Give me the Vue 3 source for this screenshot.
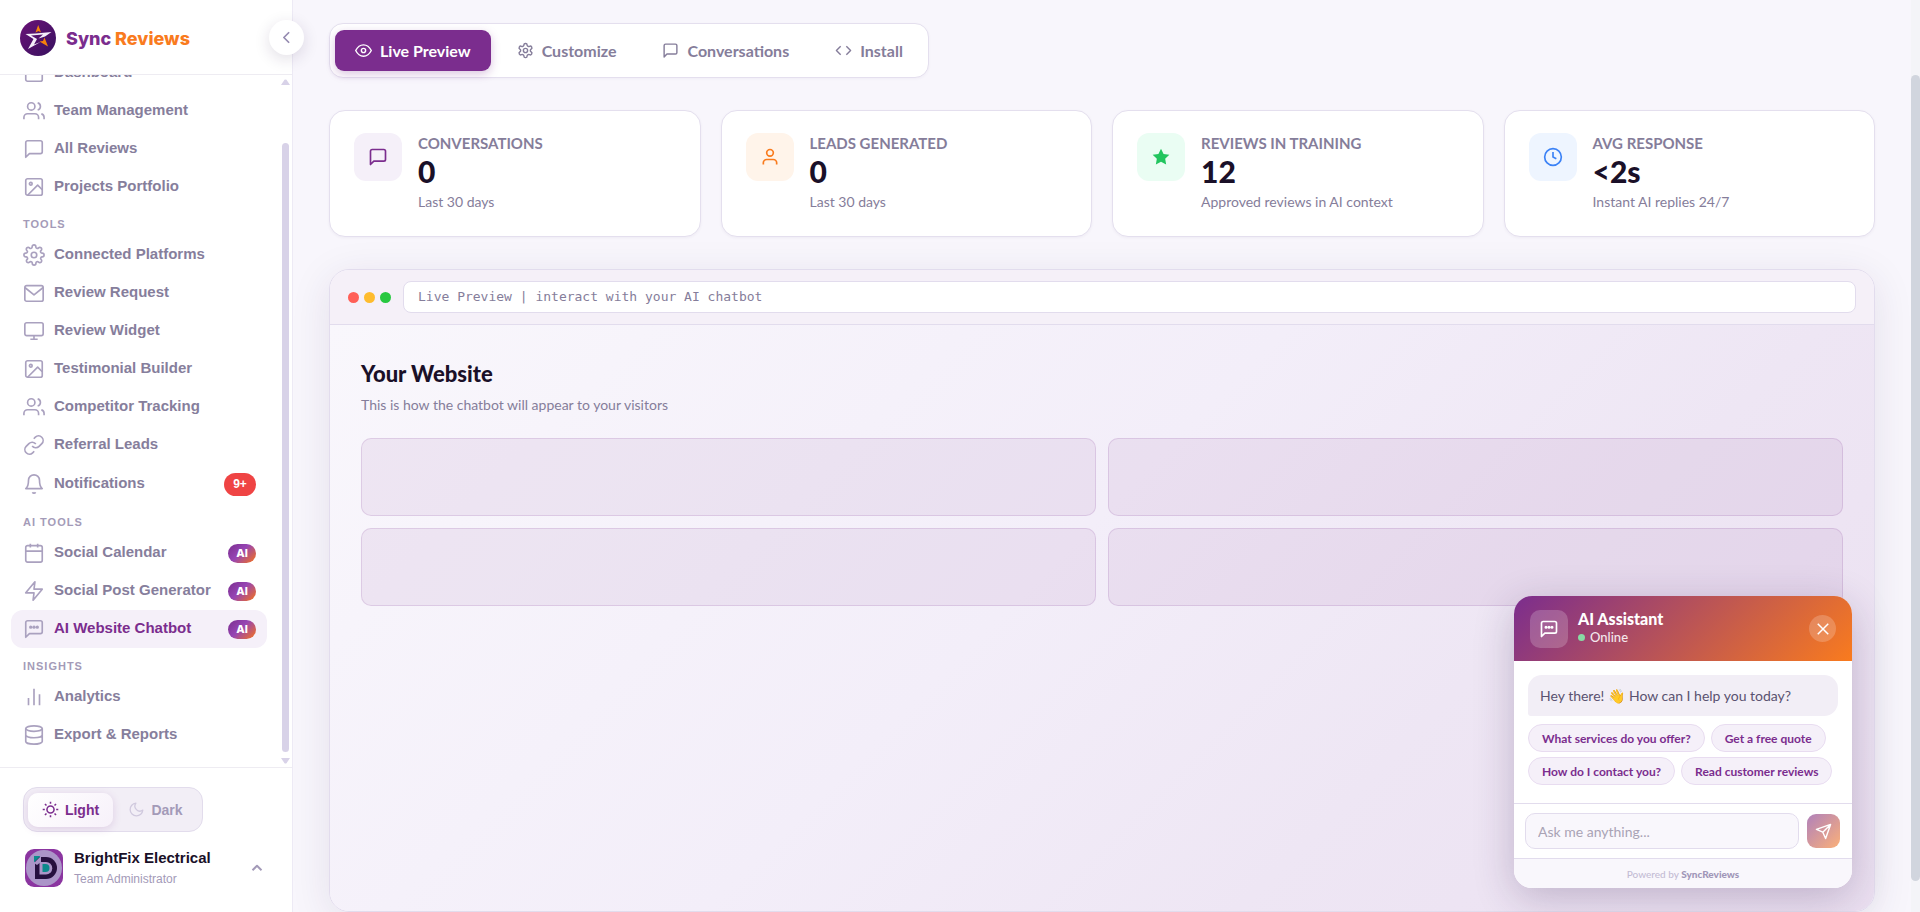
<script setup>
import { ref } from 'vue'

const icons = {
  home: '<rect x="3" y="3" width="18" height="18" rx="2"/>',
  users: '<path d="M17 21v-2a4 4 0 0 0-4-4H5a4 4 0 0 0-4 4v2"/><circle cx="9" cy="7" r="4"/><path d="M23 21v-2a4 4 0 0 0-3-3.87M16 3.13a4 4 0 0 1 0 7.75"/>',
  message: '<path d="M21 15a2 2 0 0 1-2 2H7l-4 4V5a2 2 0 0 1 2-2h14a2 2 0 0 1 2 2z"/>',
  image: '<rect x="3" y="3" width="18" height="18" rx="2"/><circle cx="8.5" cy="8.5" r="1.5"/><path d="M21 15l-5-5L5 21"/>',
  gear: '<circle cx="12" cy="12" r="3"/><path d="M19.4 15a1.65 1.65 0 0 0 .33 1.82l.06.06a2 2 0 1 1-2.83 2.83l-.06-.06a1.65 1.65 0 0 0-2.8 1.17V21a2 2 0 0 1-4 0v-.09a1.65 1.65 0 0 0-2.9-1.16l-.06.06a2 2 0 1 1-2.83-2.83l.06-.06A1.65 1.65 0 0 0 3.09 14H3a2 2 0 0 1 0-4h.09a1.65 1.65 0 0 0 1.16-2.9l-.06-.06a2 2 0 1 1 2.83-2.83l.06.06A1.65 1.65 0 0 0 10 3.09V3a2 2 0 0 1 4 0v.09a1.65 1.65 0 0 0 2.9 1.16l.06-.06a2 2 0 1 1 2.83 2.83l-.06.06A1.65 1.65 0 0 0 20.91 10H21a2 2 0 0 1 0 4h-.09a1.65 1.65 0 0 0-1.51 1z"/>',
  cog: '<circle cx="12" cy="12" r="3"/><path d="M12.22 2h-.44a2 2 0 0 0-2 2v.18a2 2 0 0 1-1 1.73l-.43.25a2 2 0 0 1-2 0l-.15-.08a2 2 0 0 0-2.73.73l-.22.38a2 2 0 0 0 .73 2.73l.15.1a2 2 0 0 1 1 1.72v.51a2 2 0 0 1-1 1.74l-.15.09a2 2 0 0 0-.73 2.73l.22.38a2 2 0 0 0 2.73.73l.15-.08a2 2 0 0 1 2 0l.43.25a2 2 0 0 1 1 1.73V20a2 2 0 0 0 2 2h.44a2 2 0 0 0 2-2v-.18a2 2 0 0 1 1-1.73l.43-.25a2 2 0 0 1 2 0l.15.08a2 2 0 0 0 2.73-.73l.22-.39a2 2 0 0 0-.73-2.73l-.15-.08a2 2 0 0 1-1-1.74v-.5a2 2 0 0 1 1-1.74l.15-.09a2 2 0 0 0 .73-2.73l-.22-.38a2 2 0 0 0-2.73-.73l-.15.08a2 2 0 0 1-2 0l-.43-.25a2 2 0 0 1-1-1.73V4a2 2 0 0 0-2-2z"/>',
  mail: '<rect x="2" y="4" width="20" height="17" rx="2"/><path d="M2 6l10 8 10-8"/>',
  monitor: '<rect x="2" y="3" width="20" height="14" rx="2"/><path d="M8 21h8M12 17v4"/>',
  link: '<path d="M10 13a5 5 0 0 0 7.54.54l3-3a5 5 0 0 0-7.07-7.07l-1.72 1.71"/><path d="M14 11a5 5 0 0 0-7.54-.54l-3 3a5 5 0 0 0 7.07 7.07l1.71-1.71"/>',
  bell: '<path d="M18 8A6 6 0 0 0 6 8c0 7-3 9-3 9h18s-3-2-3-9M13.73 21a2 2 0 0 1-3.46 0"/>',
  calendar: '<rect x="3" y="4" width="18" height="18" rx="2"/><path d="M16 2v4M8 2v4M3 10h18"/>',
  bolt: '<path d="M13 2L3 14h9l-1 8 10-12h-9l1-8z"/>',
  bot: '<path d="M21 15a2 2 0 0 1-2 2H7l-4 4V5a2 2 0 0 1 2-2h14a2 2 0 0 1 2 2z"/><path d="M8.400 10h.01M12 10h.01M15.600 10h.01" stroke-width="3.6" stroke-linecap="round"/>',
  chart: '<path d="M18 21V9M12 21V3M6 21v-8"/>',
  database: '<ellipse cx="12" cy="5" rx="9" ry="3"/><path d="M21 12c0 1.66-4 3-9 3s-9-1.34-9-3M3 5v14c0 1.66 4 3 9 3s9-1.34 9-3V5"/>',
  eye: '<path d="M1 12s4-8 11-8 11 8 11 8-4 8-11 8S1 12 1 12z"/><circle cx="12" cy="12" r="3"/>',
  code: '<path d="M16 18l6-6-6-6M8 6l-6 6 6 6"/>',
  user: '<path d="M20 21v-2a4 4 0 0 0-4-4H8a4 4 0 0 0-4 4v2"/><circle cx="12" cy="7" r="4"/>',
  star: '<path fill="currentColor" stroke="none" d="M12 2l3.090 6.260L22 9.270l-5 4.870 1.180 6.880L12 17.770l-6.180 3.250L7 14.140 2 9.270l6.910-1.010z"/>',
  clock: '<circle cx="12" cy="12" r="10"/><path d="M12 6v6l4 2"/>',
  sun: '<circle cx="12" cy="12" r="5"/><path d="M12 1v3M12 20v3M4.2 4.2l2.1 2.1M17.7 17.7l2.1 2.1M1 12h3M20 12h3M4.2 19.8l2.1-2.1M17.7 6.3l2.1-2.1"/>',
  moon: '<path d="M21 12.79A9 9 0 1 1 11.21 3 7 7 0 0 0 21 12.79z"/>',
  left: '<path d="M15 18l-6-6 6-6"/>',
  up: '<path d="M18 15l-6-6-6 6"/>',
  close: '<path d="M19 5L5 19M5 5l14 14"/>',
  send: '<path d="M22 2L11 13M22 2l-7 20-4-9-9-4z"/>',
}

const groups = [
  { title: '', items: [
    { label: 'Dashboard', icon: 'home' },
    { label: 'Team Management', icon: 'users' },
    { label: 'All Reviews', icon: 'message' },
    { label: 'Projects Portfolio', icon: 'image' },
  ] },
  { title: 'TOOLS', items: [
    { label: 'Connected Platforms', icon: 'gear' },
    { label: 'Review Request', icon: 'mail' },
    { label: 'Review Widget', icon: 'monitor' },
    { label: 'Testimonial Builder', icon: 'image' },
    { label: 'Competitor Tracking', icon: 'users' },
    { label: 'Referral Leads', icon: 'link' },
    { label: 'Notifications', icon: 'bell', count: '9+' },
  ] },
  { title: 'AI TOOLS', items: [
    { label: 'Social Calendar', icon: 'calendar', ai: true },
    { label: 'Social Post Generator', icon: 'bolt', ai: true },
    { label: 'AI Website Chatbot', icon: 'bot', ai: true, active: true },
  ] },
  { title: 'INSIGHTS', items: [
    { label: 'Analytics', icon: 'chart' },
    { label: 'Export & Reports', icon: 'database' },
  ] },
]

const tabs = [
  { label: 'Live Preview', icon: 'eye' },
  { label: 'Customize', icon: 'cog' },
  { label: 'Conversations', icon: 'message' },
  { label: 'Install', icon: 'code' },
]
const activeTab = ref('Live Preview')

const stats = [
  { label: 'CONVERSATIONS', value: '0', note: 'Last 30 days', icon: 'message', tone: 'purple' },
  { label: 'LEADS GENERATED', value: '0', note: 'Last 30 days', icon: 'user', tone: 'orange' },
  { label: 'REVIEWS IN TRAINING', value: '12', note: 'Approved reviews in AI context', icon: 'star', tone: 'green' },
  { label: 'AVG RESPONSE', value: '<2s', note: 'Instant AI replies 24/7', icon: 'clock', tone: 'blue' },
]

const prompts = ['What services do you offer?', 'Get a free quote', 'How do I contact you?', 'Read customer reviews']
const draft = ref('')
</script>

<template>
  <div class="app">
    <aside class="sidebar">
      <header class="brand">
        <svg class="brand-mark" viewBox="0 0 36 36" aria-hidden="true">
          <defs>
            <linearGradient id="markFill" x1="0" y1="0" x2="1" y2="1">
              <stop offset="0" stop-color="#6a1277" />
              <stop offset="1" stop-color="#37115f" />
            </linearGradient>
          </defs>
          <circle cx="18" cy="18" r="18" fill="url(#markFill)" />
          <path d="M15.500 12.500L18.200 5L21 12.500L18.500 11Z" fill="#f5820b" />
          <path d="M24.500 17.500L28 26.500L19.500 21.500L23 21Z" fill="#f5820b" />
          <path d="M31.500 12L15.500 13.500L5.500 14L13.500 19L8 29L20.500 22L14 24.500L17 19L11 15.500L23 14.500L18.500 18.500L25 16.500Z" fill="#f4effa" />
        </svg>
        <div class="brand-name"><span>Sync</span> <span class="accent">Reviews</span></div>
        <button class="collapse" type="button" aria-label="Collapse sidebar">
          <svg class="icon" viewBox="0 0 24 24" v-html="icons.left"></svg>
        </button>
      </header>

      <nav class="nav">
        <div v-for="group in groups" :key="group.title" class="group">
          <div v-if="group.title" class="group-title">{{ group.title }}</div>
          <a v-for="item in group.items" :key="item.label" href="#" class="nav-item" :class="{ active: item.active, counted: item.count }">
            <svg class="icon" viewBox="0 0 24 24" v-html="icons[item.icon]"></svg>
            <span class="nav-label">{{ item.label }}</span>
            <span v-if="item.count" class="count">{{ item.count }}</span>
            <span v-if="item.ai" class="ai">AI</span>
          </a>
        </div>
        <div class="nav-scroll" aria-hidden="true">
          <svg viewBox="0 0 9 6"><path d="M0 6L3.500 .8Q4.500 0 5.500 .8L9 6Z" /></svg>
          <div class="nav-thumb"></div>
          <svg viewBox="0 0 9 6"><path d="M0 0L3.500 5.200Q4.500 6 5.500 5.200L9 0Z" /></svg>
        </div>
      </nav>

      <footer class="side-foot">
        <div class="theme">
          <button type="button" class="on"><svg class="icon" viewBox="0 0 24 24" v-html="icons.sun"></svg>Light</button>
          <button type="button"><svg class="icon" viewBox="0 0 24 24" v-html="icons.moon"></svg>Dark</button>
        </div>
        <button class="account" type="button">
          <svg class="avatar" viewBox="0 0 38 38" aria-hidden="true">
            <rect width="38" height="38" rx="9" fill="#8b35a0" />
            <circle cx="19" cy="19" r="18" fill="#ab95c8" />
            <path d="M10 8h11a11 11 0 0 1 0 22H10z" fill="#26103f" />
            <path d="M14.500 13h6.500a6 6 0 0 1 0 12.500h-6.500z" fill="#ab95c8" />
            <path d="M17.500 15h3a4 4 0 0 1 0 8h-3z" fill="#0c8a8c" />
            <path d="M9 7h6.500L9 13.500z" fill="#0c8a8c" />
            <path d="M9 14l7-7v6l-4 3z" fill="#ab95c8" />
          </svg>
          <span class="who"><strong>BrightFix Electrical</strong><small>Team Administrator</small></span>
          <svg class="icon" viewBox="0 0 24 24" v-html="icons.up"></svg>
        </button>
      </footer>
    </aside>

    <main class="main">
      <div class="tabs">
        <button v-for="tab in tabs" :key="tab.label" type="button" :class="{ on: activeTab === tab.label }" @click="activeTab = tab.label">
          <svg class="icon" viewBox="0 0 24 24" v-html="icons[tab.icon]"></svg>{{ tab.label }}
        </button>
      </div>

      <section class="stats">
        <article v-for="stat in stats" :key="stat.label" class="stat">
          <div class="stat-icon" :class="stat.tone"><svg class="icon" viewBox="0 0 24 24" v-html="icons[stat.icon]"></svg></div>
          <div>
            <div class="stat-label">{{ stat.label }}</div>
            <div class="stat-value">{{ stat.value }}</div>
            <div class="stat-note">{{ stat.note }}</div>
          </div>
        </article>
      </section>

      <section class="preview">
        <div class="chrome">
          <div class="dots"><i></i><i></i><i></i></div>
          <div class="address">Live Preview | interact with your AI chatbot</div>
        </div>
        <div class="site">
          <h2>Your Website</h2>
          <p>This is how the chatbot will appear to your visitors</p>
          <div class="blocks"><div v-for="n in 4" :key="n"></div></div>

          <div class="chat">
            <header class="chat-head">
              <div class="chat-icon"><svg class="icon" viewBox="0 0 24 24" v-html="icons.bot"></svg></div>
              <div class="chat-title"><strong>AI Assistant</strong><span><i></i>Online</span></div>
              <button type="button" aria-label="Close chat"><svg class="icon" viewBox="0 0 24 24" v-html="icons.close"></svg></button>
            </header>
            <div class="chat-body">
              <div class="bubble">Hey there! <span class="wave">👋</span> How can I help you today?</div>
              <div class="prompts"><button v-for="p in prompts" :key="p" type="button">{{ p }}</button></div>
            </div>
            <form class="chat-form" @submit.prevent>
              <input v-model="draft" type="text" aria-label="Message" placeholder="Ask me anything..." />
              <button type="submit" aria-label="Send"><svg class="icon" viewBox="0 0 24 24" v-html="icons.send"></svg></button>
            </form>
            <div class="powered">Powered by <strong>SyncReviews</strong></div>
          </div>
        </div>
      </section>
    </main>
    <div class="page-scroll" aria-hidden="true"><div></div></div>
  </div>
</template>

<style>
body { background: #f8f6fc; overflow: hidden; }
</style>

<style scoped>
* { box-sizing: border-box; }
button { font: inherit; border: 0; background: none; padding: 0; cursor: pointer; color: inherit; }
.icon { fill: none; stroke: currentColor; stroke-width: 2; stroke-linejoin: round; flex: none; display: block; }
.app { display: flex; height: 100vh; overflow: hidden; background: #f8f6fc; font-family: Lato, "Noto Color Emoji", sans-serif; color: #1a1028; }

.sidebar { position: relative; z-index: 2; width: 293px; flex: none; display: flex; flex-direction: column; background: #fff; border-right: 1px solid #edeaf5; font-family: "Liberation Sans", Arial, sans-serif; }
.brand { position: relative; height: 75px; flex: none; display: flex; align-items: center; gap: 10px; padding: 2px 20px 0; border-bottom: 1px solid #eeecf2; }
.brand-mark { width: 36px; height: 36px; }
.brand-name { padding-top: 2px; font: 800 18px/24px Inter, sans-serif; color: #7b2d8e; }
.brand-name .accent { color: #f97b1e; }
.collapse { position: absolute; right: -12px; top: 20px; width: 35px; height: 35px; border-radius: 50%; background: #fff; color: #958ab0; display: grid; place-items: center; box-shadow: 0 4px 16px rgba(40, 20, 70, .14); }
.collapse .icon { width: 21px; height: 21px; }

.nav { position: relative; flex: 1; min-height: 0; overflow: hidden; display: flex; flex-direction: column; justify-content: flex-end; padding: 0 25px 13px 11px; }
.group-title { height: 30px; padding: 3px 12px 0; font-size: 11px; line-height: 30px; font-weight: 700; letter-spacing: 1px; color: #a49bb8; }
.nav-item { display: flex; align-items: center; gap: 9px; height: 38px; padding: 0 11px 0 12px; border-radius: 12px; color: #867e9c; text-decoration: none; font-size: 15px; font-weight: 700; white-space: nowrap; }
.nav-item.counted { height: 40px; }
.nav-item .icon { width: 22px; height: 22px; stroke-width: 1.8; color: #aaa1bf; }
.nav-label { flex: 1; padding-bottom: 2px; line-height: 20px; }
.nav-item.active { background: #f5f0f9; color: #7b2d8e; }
.count { width: 32px; height: 23px; border-radius: 12px; background: #ef4444; color: #fff; font-size: 12px; line-height: 22px; text-align: center; }
.ai { width: 28px; height: 19px; border-radius: 10px; background: linear-gradient(135deg, #7b2d8e 0%, #9645b4 45%, #f97316 100%); color: #fff; font: 800 11px/19px Inter, sans-serif; text-align: center; }
.nav-scroll { position: absolute; right: 2px; top: 4px; bottom: 3px; width: 9px; display: flex; flex-direction: column; align-items: center; }
.nav-scroll svg { width: 9px; height: 6px; fill: #d8d2e8; flex: none; }
.nav-thumb { flex: 1; width: 7px; margin: 58px 0 6px; border-radius: 4px; background: #d8d2e8; }

.side-foot { height: 145px; flex: none; padding: 19px 24px 0 23px; border-top: 1px solid #eeecf2; }
.theme { display: flex; width: 180px; height: 45px; padding: 5px 4px; border: 1px solid #e2dcec; border-radius: 14px; background: #f2eef6; }
.theme button { display: flex; align-items: center; justify-content: center; gap: 6px; width: 85px; height: 34px; padding-bottom: 1px; border-radius: 10px; font-size: 14px; line-height: 18px; font-weight: 700; color: #a39ab8; }
.theme .icon { width: 17px; height: 17px; stroke-width: 1.8; color: #d0c9de; }
.theme .on { color: #7b2d8e; background: linear-gradient(135deg, #fff, #f7f1fa); box-shadow: 0 2px 8px rgba(123, 45, 142, .16); }
.theme .on .icon { color: #7b2d8e; stroke-width: 2.2; }
.account { display: flex; align-items: center; width: 100%; margin-top: 16px; padding: 0 2px; text-align: left; }
.avatar { width: 38px; height: 38px; flex: none; }
.who { flex: 1; margin-left: 11px; }
.who strong, .who small { display: block; }
.who strong { font-size: 15px; line-height: 20px; color: #1a1028; }
.who small { font-size: 12px; line-height: 18px; padding-top: 2px; color: #a39ab8; }
.account .icon { width: 18px; height: 18px; color: #a39ab8; stroke-width: 2.6; }

.main { flex: 1; min-width: 0; padding: 23px 36px 0; }
.tabs { display: inline-flex; gap: 6px; padding: 6px 5px; border: 1px solid #e4dfee; border-radius: 14px; background: #fff; vertical-align: top; box-shadow: 0 1px 3px rgba(60, 30, 90, .04); }
.tabs button { display: flex; align-items: center; gap: 8px; height: 41px; padding: 0 20px; border-radius: 9px; font-size: 16px; font-weight: 700; color: #857d9a; }
.tabs .icon { width: 17px; height: 17px; }
.tabs .on { background: #7b2d8e; color: #fff; box-shadow: 0 3px 10px rgba(123, 45, 142, .28); }

.stats { display: grid; grid-template-columns: repeat(4, 1fr); gap: 20px; margin-top: 32px; }
.stat { display: flex; gap: 16px; min-height: 127px; padding: 22px 24px 21px; border: 1px solid #e4dfee; border-radius: 16px; background: #fff; box-shadow: 0 1px 3px rgba(60, 30, 90, .05); }
.stat-icon { width: 48px; height: 48px; border-radius: 12px; display: grid; place-items: center; flex: none; }
.stat-icon .icon { width: 20px; height: 20px; }
.purple { background: #f5f0f9; color: #7b2d8e; }
.orange { background: #fff4ea; color: #f97b1e; }
.green { background: #eafdf3; color: #22c55e; }
.blue { background: #eef5ff; color: #3b82f6; }
.stat-label { font-size: 15px; line-height: 20px; font-weight: 700; color: #857d9a; }
.stat-value { font-size: 30px; line-height: 36px; font-weight: 900; color: #1a1028; }
.stat-note { font-size: 14px; line-height: 26px; color: #857d9a; }

.preview { margin-top: 32px; border: 1px solid #e2dced; border-radius: 20px; box-shadow: 0 8px 40px rgba(50, 25, 75, .1); }
.chrome { display: flex; align-items: center; gap: 12px; padding: 11px 18px; border-bottom: 1px solid #e2dced; border-radius: 19px 19px 0 0; background: #f5f0f8; }
.dots { display: flex; gap: 5px; }
.dots i { width: 11px; height: 11px; border-radius: 50%; background: #ff5f57; }
.dots i:nth-child(2) { background: #febc2e; }
.dots i:nth-child(3) { background: #28c840; }
.address { flex: 1; height: 32px; padding: 0 14px; border: 1px solid #e2dced; border-radius: 8px; background: #fff; color: #857d9a; font: 13px/30px "DejaVu Sans Mono", monospace; }
.site { position: relative; min-height: 586px; padding: 33px 31px 32px; border-radius: 0 0 19px 19px; background: linear-gradient(135deg, #f9f7fc 0%, #f3eef9 45%, #eee6f4 70%, #ebe0f1 100%); }
h2 { margin: 0; font-size: 22px; line-height: 32px; font-weight: 900; }
p { margin: 3px 0 22px; font-size: 14px; line-height: 23px; color: #857d9a; }
.blocks { display: grid; grid-template-columns: 1fr 1fr; gap: 12px; }
.blocks div { height: 78px; border: 1px solid rgba(123, 45, 142, .14); border-radius: 10px; background: rgba(123, 45, 142, .08); }

.chat { position: absolute; right: 22px; bottom: 23px; width: 338px; border-radius: 18px; overflow: hidden; background: #fff; box-shadow: 0 10px 40px rgba(50, 25, 75, .24); }
.chat-head { display: flex; align-items: center; gap: 10px; height: 65px; padding: 0 16px; background: linear-gradient(135deg, #7b2d8e, #f97b1e); color: #fff; }
.chat-icon { width: 38px; height: 38px; border-radius: 10px; display: grid; place-items: center; background: rgba(255, 255, 255, .2); }
.chat-icon .icon { width: 20px; height: 20px; }
.chat-title { flex: 1; padding-bottom: 2px; }
.chat-title strong { display: block; font-size: 16px; line-height: 19px; font-weight: 900; }
.chat-title span { display: flex; align-items: center; gap: 5px; font-size: 13px; line-height: 18px; font-weight: 500; opacity: .88; }
.chat-title i { width: 7px; height: 7px; border-radius: 50%; background: #86efac; }
.chat-head button { width: 27px; height: 27px; border-radius: 50%; display: grid; place-items: center; background: rgba(255, 255, 255, .2); }
.chat-head button .icon { width: 18px; height: 18px; }
.chat-body { padding: 14px 14px 18px; }
.bubble { height: 41px; padding: 0 12px; border-radius: 14px 14px 14px 3px; background: #f2eef6; font-size: 14px; line-height: 41px; color: #5a5270; white-space: nowrap; }
.wave { font-family: "Noto Color Emoji", sans-serif; }
.prompts { display: flex; flex-wrap: wrap; gap: 5px 6px; margin-top: 8px; }
.prompts button { height: 28px; padding: 0 13px; border: 1px solid #e8dcf0; border-radius: 14px; background: #f5f0f9; color: #7b2d8e; font-size: 12px; font-weight: 700; white-space: nowrap; }
.chat-form { display: flex; align-items: center; gap: 8px; height: 55px; padding: 0 12px 0 11px; border-top: 1px solid #e2dced; }
.chat-form input { flex: 1; min-width: 0; height: 36px; padding: 0 12px; border: 1px solid #e2dced; border-radius: 10px; background: #f9f7fc; font: 14px Lato, sans-serif; color: #1a1028; outline: 0; }
.chat-form input::placeholder { color: #a9a3b5; opacity: 1; }
.chat-form button { width: 33px; height: 34px; border-radius: 9px; display: grid; place-items: center; color: #fff; background: linear-gradient(135deg, #b081bb, #fbb079); }
.chat-form .icon { width: 17px; height: 17px; }
.powered { height: 30px; border-top: 1px solid #e2dced; background: #f9f7fc; text-align: center; font-size: 10px; line-height: 30px; font-weight: 500; color: #c4bcd4; }
.powered strong { font-weight: 900; color: #a096b8; }

.page-scroll { width: 9px; flex: none; padding: 75px 0 31px; background: #f4f4f8; }
.page-scroll div { height: 100%; border-radius: 5px; background: #d1d5de; }
</style>
